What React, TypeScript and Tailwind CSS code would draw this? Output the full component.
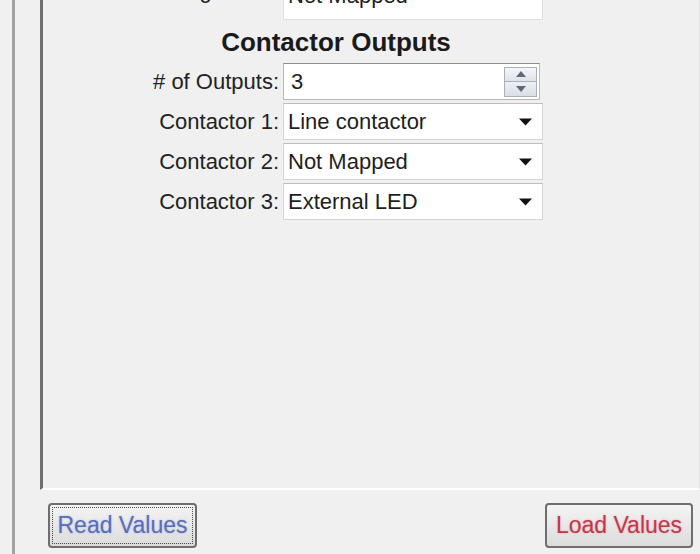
import React from "react";

const font = { fontFamily: '"Liberation Sans", Arial, sans-serif' };

function DropArrow() {
  return (
    <svg width="13" height="8" viewBox="0 0 13 8" className="shrink-0">
      <path d="M0 0.5 H13 L6.5 7.5 Z" fill="#111" />
    </svg>
  );
}

function Combo({ value }: { value: string }) {
  return (
    <div className="flex h-[37px] w-[260px] items-center justify-between border border-[#d6d6d6] border-t-[#bdbdbd] bg-white pl-[4px] pr-[10px]">
      <span className="text-[22px] leading-none text-[#1e1e1e]">{value}</span>
      <DropArrow />
    </div>
  );
}

function Spinner({ value }: { value: string }) {
  return (
    <div className="flex h-[37px] w-[257px] items-center justify-between border border-[#b9b9b9] border-t-[#8e8e8e] bg-white pl-[7px] pr-[2px]">
      <span className="text-[22px] leading-none text-[#1e1e1e]">{value}</span>
      <div className="flex h-[30px] w-[33px] flex-col border border-[#a9b0ba] bg-[#e4e8ee]">
        <div className="flex flex-1 items-center justify-center border-b border-[#a9b0ba] bg-gradient-to-b from-[#f4f6f9] to-[#dfe4ea]">
          <svg width="10" height="6" viewBox="0 0 10 6">
            <path d="M0 6 L5 0 L10 6 Z" fill="#5d6a7b" />
          </svg>
        </div>
        <div className="flex flex-1 items-center justify-center bg-gradient-to-b from-[#eef1f5] to-[#d9dfe6]">
          <svg width="10" height="6" viewBox="0 0 10 6">
            <path d="M0 0 L10 0 L5 6 Z" fill="#5d6a7b" />
          </svg>
        </div>
      </div>
    </div>
  );
}

function Row({
  label,
  children,
  labelClass = "",
}: {
  label: string;
  children: React.ReactNode;
  labelClass?: string;
}) {
  return (
    <div className="flex items-center">
      <div
        className={`w-[240px] pr-[4px] text-right text-[22px] leading-none text-[#222] whitespace-nowrap ${labelClass}`}
      >
        {label}
      </div>
      {children}
    </div>
  );
}

export default function App() {
  return (
    <div
      className="flex h-[554px] w-[700px] overflow-hidden bg-[#f0f0f0] pl-[12px]"
      style={font}
    >
      <div className="flex flex-1 border-l-[3px] border-[#a3a3a3] pl-[25px]">
        <div className="flex flex-1 flex-col">
          {/* group panel */}
          <div className="flex h-[490px] flex-col border-b-2 border-r border-l-[3px] border-b-white border-r-[#e2e2e2] border-l-[#6f6f6f] pr-[4px]">
            <div className="mt-[-17px] flex flex-col">
              <Row label="Warning Mode:" labelClass="self-start -mt-[3px]">
                <div className="flex h-[37px] w-[260px] items-start border border-[#e0e0e0] bg-white pl-[4px] pt-[1px]">
                  <span className="text-[22px] leading-none text-[#1e1e1e]">Not Mapped</span>
                </div>
              </Row>
              <div className="flex h-[43px] w-[586px] items-center justify-center">
                <span className="text-[26px] font-bold leading-none text-[#1a1a1a]">
                  Contactor Outputs
                </span>
              </div>
              <div className="flex flex-col gap-[3px]">
                <Row label="# of Outputs:">
                  <Spinner value="3" />
                </Row>
                <Row label="Contactor 1:">
                  <Combo value="Line contactor" />
                </Row>
                <Row label="Contactor 2:">
                  <Combo value="Not Mapped" />
                </Row>
                <Row label="Contactor 3:">
                  <Combo value="External LED" />
                </Row>
              </div>
            </div>
          </div>
          {/* action buttons */}
          <div className="flex items-start justify-between pl-[8px] pr-[7px] pt-[13px]">
            <button className="h-[45px] w-[149px] rounded-[4px] border-2 border-[#6e6e6e] bg-gradient-to-b from-[#f4f4f4] to-[#dcdcdc] p-[2px]">
              <div className="flex h-full w-full items-center justify-center border border-dotted border-[#4a4a4a]">
                <span className="text-[23px] leading-none text-[#5a6db6] [text-shadow:0_0_2px_rgba(140,160,230,0.7)]">
                  Read Values
                </span>
              </div>
            </button>
            <button className="flex h-[45px] w-[148px] items-center justify-center rounded-[4px] border-2 border-[#6e6e6e] bg-gradient-to-b from-[#f4f4f4] to-[#dcdcdc]">
              <span className="text-[23px] leading-none text-[#bd3a4a] [text-shadow:0_0_2px_rgba(240,130,150,0.7)]">
                Load Values
              </span>
            </button>
          </div>
        </div>
      </div>
    </div>
  );
}
